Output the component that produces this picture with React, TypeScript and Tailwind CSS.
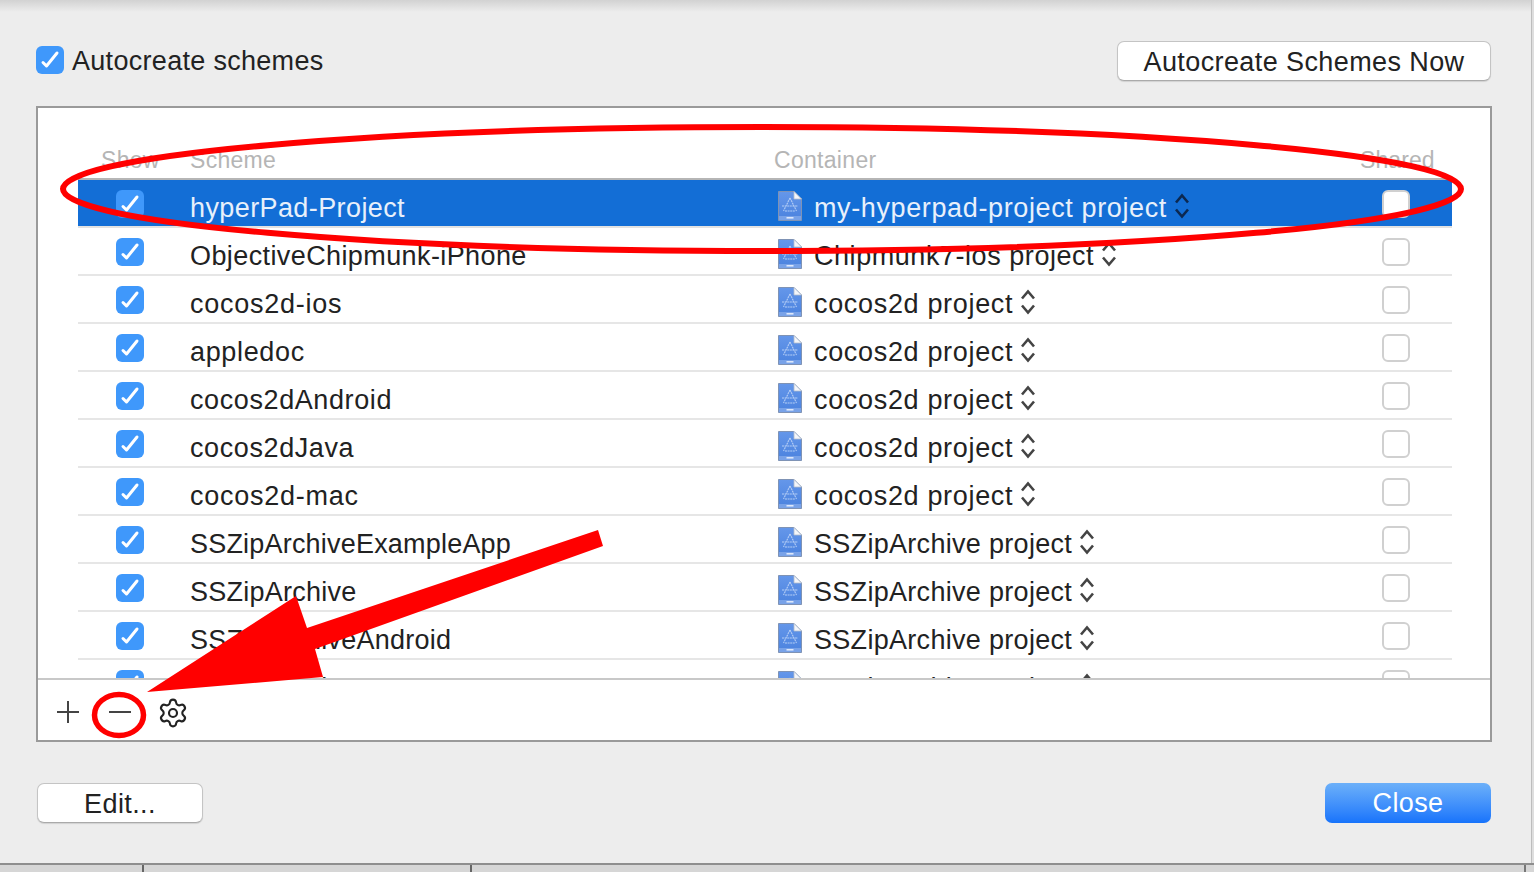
import { Settings } from "lucide-react";

const rows = [
  ["hyperPad-Project", "my-hyperpad-project project", "tracking-[0.4px]", "tracking-[0.62px]"],
  ["ObjectiveChipmunk-iPhone", "Chipmunk7-ios project", "tracking-[0.4px]", "tracking-[0.55px]"],
  ["cocos2d-ios", "cocos2d project", "tracking-[0.75px]", "tracking-[0.67px]"],
  ["appledoc", "cocos2d project", "tracking-[0.65px]", "tracking-[0.67px]"],
  ["cocos2dAndroid", "cocos2d project", "tracking-[0.6px]", "tracking-[0.67px]"],
  ["cocos2dJava", "cocos2d project", "tracking-[0.6px]", "tracking-[0.67px]"],
  ["cocos2d-mac", "cocos2d project", "tracking-[0.75px]", "tracking-[0.67px]"],
  ["SSZipArchiveExampleApp", "SSZipArchive project", "tracking-[0.2px]", "tracking-[0.3px]"],
  ["SSZipArchive", "SSZipArchive project", "tracking-[0.25px]", "tracking-[0.3px]"],
  ["SSZipArchiveAndroid", "SSZipArchive project", "tracking-[0.25px]", "tracking-[0.3px]"],
  ["SSZipArchive-Mac", "SSZipArchive project", "tracking-[0.25px]", "tracking-[0.3px]"],
];

function Check({ on }: { on: boolean }) {
  if (!on) return <span className="block w-7 h-7 rounded-[6px] bg-white border-2 border-[#d0d0d0]" />;
  return (
    <span className="block w-7 h-7 rounded-[6px] bg-[#3f98fb]">
      <svg width="28" height="28" viewBox="0 0 28 28" fill="none" className="block">
        <path d="M7 16.5 L10.5 20 L21 7" stroke="#fff" strokeWidth="3" strokeLinecap="round" strokeLinejoin="round" />
      </svg>
    </span>
  );
}

function FileIcon() {
  return (
    <svg width="25" height="30" viewBox="0 0 25 30" className="block mt-1">
      <defs>
        <linearGradient id="fi" x1="0" y1="0" x2="0" y2="1">
          <stop offset="0" stopColor="#6597ea" />
          <stop offset="1" stopColor="#4a82de" />
        </linearGradient>
      </defs>
      <path d="M0.5 0.5 H16 L23.5 8 V29.5 H0.5 Z" fill="url(#fi)" stroke="#7f93b5" strokeWidth="1" />
      <path d="M16 0.5 L16 8 H23.5 Z" fill="#f4f6fa" stroke="#b3bccb" strokeWidth="0.8" />
      <path d="M12 7 L5.5 20 M12 7 L18.5 20 M4 15 H20 M7 20 H17" stroke="#b4cdf5" strokeWidth="1.1" strokeDasharray="2 0.6" fill="none" />
      <rect x="1" y="25" width="22" height="4" fill="#78a2e8" />
      <rect x="8.5" y="26" width="7" height="1.6" fill="#dde8fb" />
    </svg>
  );
}

function Chevrons({ dark }: { dark: boolean }) {
  return (
    <svg width="16" height="26" viewBox="0 0 16 26" fill="none" className="block mt-1 ml-[-4px]">
      <path d="M2 9.5 L8 2.5 L14 9.5 M2 16.5 L8 23.5 L14 16.5" stroke={dark ? "#0c2850" : "#444"} strokeWidth="2.6" />
    </svg>
  );
}

function Btn({ w, label }: { w: string; label: string }) {
  return (
    <button className={`${w} h-10 pb-0.5 rounded-[7px] bg-white border border-[#c4c4c4] border-b-[#aaa] text-[27px] tracking-[0.4px] text-[#222] shadow-[0_1px_1px_rgba(0,0,0,0.12)]`}>
      {label}
    </button>
  );
}

export default function App() {
  return (
    <div className="relative w-[1534px] h-[872px] overflow-hidden bg-[#ededed] font-['Liberation_Sans',sans-serif]">
      <div className="h-3 bg-gradient-to-b from-[#d2d2d2] to-[#ededed]" />
      <div className="pl-9 pr-[43px] pt-[29px] flex justify-between items-center h-[69px]">
        <label className="flex items-center gap-2 text-[27px] tracking-[0.3px] text-[#222]">
          <span className="-mt-0.5"><Check on /></span>
          <span>Autocreate schemes</span>
        </label>
        <Btn w="w-[374px]" label="Autocreate Schemes Now" />
      </div>

      <div className="mt-[25px] ml-9 w-[1456px] h-[636px] border-2 border-[#9a9a9a] bg-white flex flex-col">
        <div className="mx-10 w-[1374px] h-[72px] shrink-0 border-b-2 border-[#b5b5b5] text-[23px] tracking-[0.3px] text-[#b5b5b5]">
          <div className="grid grid-cols-[112px_584px_586px_1fr] pt-[35px]">
            <span className="pl-[23px]">Show</span>
            <span>Scheme</span>
            <span>Container</span>
            <span className="tracking-[0.1px]">Shared</span>
          </div>
        </div>
        <div className="mx-10 w-[1374px] h-[498px] shrink-0 overflow-hidden">
          {rows.map(([a, b, ta, tb], i) => {
            const sel = i === 0;
            return (
              <div
                key={i}
                className={`grid grid-cols-[112px_588px_604px_1fr] items-center h-12 border-b-2 text-[27px] ${sel ? "bg-[#136ed6] text-[#e8f0fb] border-[#e2e2e2]" : "text-[#222] border-[#e6e6e6]"}`}
              >
                <span className="pl-[38px]"><Check on /></span>
                <span className={`pt-2 ${ta}`}>{a}</span>
                <span className="flex items-center gap-[11px]">
                  <FileIcon />
                  <span className={`pt-2 ${tb}`}>{b}</span>
                  <Chevrons dark={sel} />
                </span>
                <span><Check on={false} /></span>
              </div>
            );
          })}
        </div>
        <div className="flex-1 border-t-2 border-[#c8c8c8] flex items-center pl-[18px] pt-1">
          <svg width="24" height="24" viewBox="0 0 24 24" className="block"><path d="M12 1 V23 M1 12 H23" stroke="#444" strokeWidth="2" /></svg>
          <svg width="24" height="24" viewBox="0 0 24 24" className="block ml-[28px]"><path d="M1 12 H23" stroke="#444" strokeWidth="2" /></svg>
          <Settings size={32} strokeWidth={1.6} color="#222" className="ml-[25px] mt-0.5" />
        </div>
      </div>

      <div className="mt-[41px] pl-[37px] pr-[43px] flex justify-between">
        <Btn w="w-[166px]" label="Edit..." />
        <button className="w-[166px] h-10 rounded-[7px] bg-gradient-to-b from-[#6cb0f9] to-[#1673fb] text-[27px] tracking-[0.4px] text-white">Close</button>
      </div>

      <div className="absolute left-0 right-0 bottom-0 h-[9px] bg-[#d6d6d6] border-t-2 border-[#8e8e8e]">
        <div className="absolute left-[142px] top-0 w-0.5 h-2 bg-[#666]" />
        <div className="absolute left-[470px] top-0 w-0.5 h-2 bg-[#666]" />
        <div className="absolute left-[1524px] top-0 w-0.5 h-2 bg-[#777]" />
      </div>
      <div className="absolute right-0 top-0 bottom-[9px] w-[3px] bg-[#dedede] border-l border-[#bdbdbd]" />

      <svg className="absolute inset-0 pointer-events-none" width="1534" height="872" viewBox="0 0 1534 872" fill="none">
        <ellipse cx="762" cy="189" rx="699" ry="62" stroke="#ff0000" strokeWidth="6" />
        <ellipse cx="119" cy="715" rx="24.5" ry="20.5" stroke="#ff0000" strokeWidth="5.5" />
        <polygon points="598,530 603,546 315,649 323,677 147,692 296,596 307,628" fill="#ff0000" />
      </svg>
    </div>
  );
}
